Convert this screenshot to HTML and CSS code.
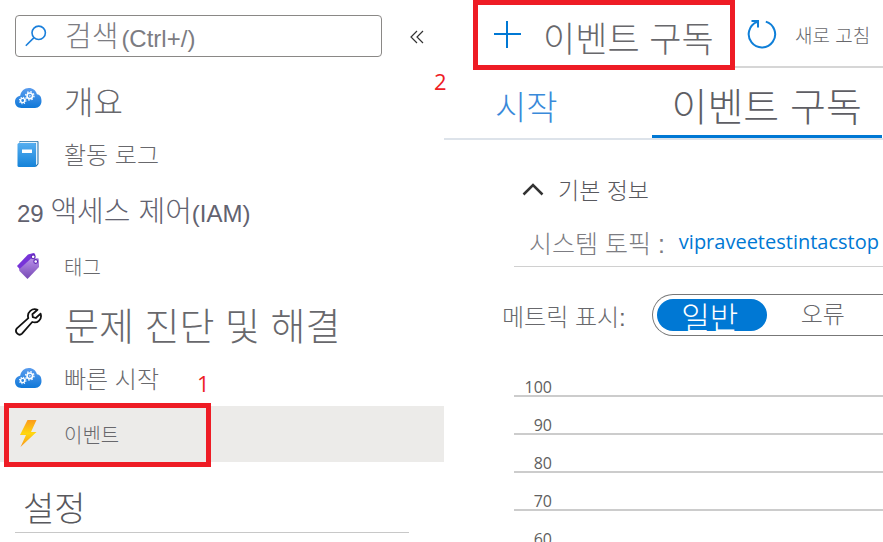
FILE: index.html
```html
<!DOCTYPE html>
<html lang="ko">
<head>
<meta charset="utf-8">
<title>이벤트 구독</title>
<link rel="stylesheet" href="styles.css">
</head>
<body>
<svg class="defs" aria-hidden="true">
  <defs>
    <linearGradient id="cloudFill" x1="0" y1="0" x2="0" y2="1"><stop offset="0" stop-color="#5a9cee"/><stop offset="1" stop-color="#0f78d8"/></linearGradient>
    <linearGradient id="bookFill" x1="0" y1="0" x2="0" y2="1"><stop offset="0" stop-color="#55aef0"/><stop offset="1" stop-color="#1583d9"/></linearGradient>
    <linearGradient id="tagFill" x1="0" y1="0" x2="0" y2="1"><stop offset="0" stop-color="#b991ea"/><stop offset="1" stop-color="#7648b4"/></linearGradient>
    <linearGradient id="boltFill" x1="0" y1="0" x2="0" y2="1"><stop offset="0" stop-color="#fb9a1c"/><stop offset=".5" stop-color="#ffd70f"/><stop offset="1" stop-color="#f9941e"/></linearGradient>
    <symbol id="cloud" viewBox="0 0 28 28">
      <path d="M6.500 24C2.500 24 0 21.300 0 17.800c0-3.100 2.200-5.600 5.200-6C6 7 9.500 4 13.800 4c4 0 7.200 2.500 8.100 6.200C25.500 10.600 26.500 13.700 26.500 17c0 4-2.600 7-6.500 7z" fill="url(#cloudFill)"/>
      <g fill="none" stroke="#fff">
        <circle cx="14.800" cy="11.800" r="2.800" stroke-width="1.600"/>
        <circle cx="14.800" cy="11.800" r="4.200" stroke-width="1.300" stroke-dasharray="1.500 1.799"/>
        <circle cx="14.800" cy="11.800" r=".6" stroke-width=".8"/>
        <circle cx="7.700" cy="16.500" r="2.100" stroke-width="1.400"/>
        <circle cx="7.700" cy="16.500" r="3.200" stroke-width="1.100" stroke-dasharray="1.200 1.313"/>
      </g>
    </symbol>
  </defs>
</svg>
<div class="app">
  <nav class="sidebar">
    <div class="search-row">
      <label class="search">
        <svg width="22" height="22" viewBox="0 0 22 22" fill="none" stroke="#1a7fdb" stroke-width="1.600"><circle cx="13.700" cy="7.800" r="6.700"/><path d="M9 12.600.800 20.800"/></svg>
        <span class="search-hint"><span class="ko">검색</span>(Ctrl+/)</span>
        <input class="search-input" type="text" aria-label="검색(Ctrl+/)">
      </label>
      <button class="collapse" aria-label="접기">
        <svg width="14" height="14" viewBox="0 0 14 14" fill="none" stroke="#333" stroke-width="1.200"><path d="M7 1 1 7l6 6M13 1 7 7l6 6"/></svg>
      </button>
    </div>
    <a class="item size-xl" href="#"><svg class="icon" width="28" height="28"><use href="#cloud"/></svg>개요</a>
    <a class="item size-md" href="#">
      <svg class="icon" width="28" height="28" viewBox="0 0 28 28"><path d="M4.500 1h18q1 0 1 1v22l-2 2.500H5z" fill="#1f6fa8"/><path d="M5.500 1.800h17v22l-1.500 1.500V3.200H4z" fill="#e8f4fc"/><rect x="2.500" y="3" width="18.500" height="24" rx="1.500" fill="url(#bookFill)"/><rect x="7" y="9.500" width="10" height="3.500" fill="#fff"/></svg>활동 로그</a>
    <a class="item item-plain" href="#">29 <span class="ko">액세스 제어</span>(IAM)</a>
    <a class="item size-sm" href="#">
      <svg class="icon" width="28" height="28" viewBox="0 0 28 28"><path d="M2 14 13 2.500 18.500 1q1.500 0 1.700 1.500V9L7 20z" fill="#7734d8"/><path d="M4 17.500 16 6.500l6.500-.5q1.500.2 1.500 2v7L12.500 27 4.500 19z" fill="url(#tagFill)"/><g fill="#fff" stroke="#5c25b3" stroke-width="1.100"><circle cx="18.200" cy="4.800" r="1.900"/><circle cx="20.700" cy="9.500" r="1.900"/></g></svg>태그</a>
    <a class="item size-xxl" href="#">
      <svg class="icon" width="28" height="28" viewBox="0 0 28 28" fill="none" stroke="#111" stroke-width="1.800" stroke-linejoin="round"><path d="M22.500 1.800C17.500-.500 11.500 4 13.300 10.200L1.600 20.700C-.600 24.500 4 28.500 7 25.600L17.200 14c5.500 1.800 10.200-3 8.400-8.300L20.800 10l-3-.8-.4-3z"/></svg>문제 진단 및 해결</a>
    <a class="item size-md" href="#"><svg class="icon" width="28" height="28"><use href="#cloud"/></svg>빠른 시작</a>
    <a class="item size-sm selected" href="#">
      <svg class="icon" width="28" height="28" viewBox="0 0 28 28"><path d="M12.500 0h9L16 12h5.500L5.500 27 11 15H5z" fill="url(#boltFill)"/></svg>이벤트
      <span class="mark mark-one"></span><span class="step step-one">1</span></a>
    <h2 class="group">설정</h2>
  </nav>
  <main class="main">
    <div class="toolbar">
      <button class="command command-add">
        <svg width="27" height="27" viewBox="0 0 27 27" stroke="#0078d4" stroke-width="2" fill="none"><path d="M13 0v27M0 13h27"/></svg>이벤트 구독</button>
      <button class="command command-refresh">
        <svg width="30" height="30" viewBox="0 0 30 30" stroke="#0f7fd8" stroke-width="2" fill="none"><path d="M18.800 2.600A13.200 13.200 0 1 1 10.200 2.900M4.500 2H11v6.500"/></svg>새로 고침</button>
      <span class="mark mark-two"></span><span class="step step-two">2</span>
    </div>
    <div class="tabs" role="tablist">
      <button class="tab" role="tab" aria-selected="false">시작</button>
      <button class="tab tab-active" role="tab" aria-selected="true">이벤트 구독</button>
    </div>
    <section class="content">
      <button class="essentials">
        <svg width="22" height="14" viewBox="0 0 22 14" fill="none" stroke="#333" stroke-width="2.500"><path d="M1.500 12.500 11 3l9.500 9.500"/></svg>기본 정보</button>
      <div class="topic"><span>시스템 토픽 :</span><a class="topic-link" href="#">vipraveetestintacstop</a></div>
      <div class="metrics">
        <span class="metrics-label">메트릭 표시:</span>
        <div class="pills">
          <button class="pill pill-on" aria-pressed="true">일반</button>
          <button class="pill" aria-pressed="false">오류</button>
        </div>
      </div>
      <div class="chart">
        <div class="tick"><span class="tick-label">100</span></div>
        <div class="tick"><span class="tick-label">90</span></div>
        <div class="tick"><span class="tick-label">80</span></div>
        <div class="tick"><span class="tick-label">70</span></div>
        <div class="tick"><span class="tick-label">60</span></div>
      </div>
    </section>
  </main>
</div>
</body>
</html>
```
FILE: styles.css
```css
* { box-sizing: border-box; }
body {
  margin: 0;
  background: #fff;
  color: #68686c;
  font-family: "Liberation Sans", "Noto Sans CJK KR", sans-serif;
  font-weight: 300;
  font-size: 24px;
}
button {
  border: 0;
  padding: 0;
  margin: 0;
  background: none;
  color: inherit;
  font: inherit;
  white-space: nowrap;
}
a { text-decoration: none; color: inherit; }
svg { flex: none; }
.defs { position: absolute; width: 0; height: 0; }
.app { display: flex; height: 100vh; overflow: hidden; }
.ko { font-size: 29px; }

.sidebar { flex: none; width: 444px; }
.search-row { display: flex; align-items: flex-start; gap: 28px; height: 70px; padding: 15px 20px 0 15px; }
.search {
  position: relative;
  display: flex;
  align-items: center;
  gap: 18px;
  flex: 1;
  height: 42px;
  padding-left: 9px;
  border: 1px solid #8a8886;
  border-radius: 4px;
}
.search-hint { display: flex; align-items: baseline; gap: 3px; padding-top: 4px; line-height: 40px; color: #7c7c82; }
.search-input { position: absolute; inset: 0; width: 100%; border: 0; background: transparent; font: inherit; }
.collapse { height: 44px; line-height: 0; }
.item {
  position: relative;
  display: flex;
  align-items: center;
  height: 56px;
  padding: 4px 0 0 15px;
  line-height: 1;
  white-space: nowrap;
}
.icon { margin: 0 21px 5px 0; }
.size-sm { font-size: 20px; }
.size-md { font-size: 24px; }
.size-xl { padding-top: 10px; font-size: 32px; }
.size-xxl { padding-top: 10px; font-size: 38px; }
.size-xl .icon, .size-xxl .icon { margin-bottom: 11px; }
.item-plain { display: block; padding: 2px 0 0 17px; line-height: 56px; color: #62626f; }
.selected { background: #ecebe9; }
.group {
  margin: 22px 35px 0 15px;
  padding: 2px 0 0 8px;
  border-bottom: 1px solid #c8c8c8;
  font-size: 34px;
  font-weight: 300;
  line-height: 46px;
  color: #58585d;
}

.mark { position: absolute; border: 5px solid #ee1c25; pointer-events: none; }
.mark-one { left: 4px; top: -3px; width: 207px; height: 64px; }
.mark-two { left: 0; top: 0; width: 262px; height: 70px; }
.step { position: absolute; color: #ee1c25; font: 500 22px/30px "Open Sans", sans-serif; }
.step-one { left: 197px; top: -38px; }
.step-two { left: -39px; top: 66px; }

.main { flex: 1; min-width: 0; }
.toolbar {
  position: relative;
  display: flex;
  align-items: center;
  height: 68px;
  margin-left: 29px;
  border-bottom: 2px solid #d6d6d6;
}
.command { display: flex; align-items: center; height: 68px; }
.command-add { width: 262px; padding: 6px 0 0 21px; gap: 22px; font-size: 35px; }
.command-add svg { margin-bottom: 4px; }
.command-refresh { padding: 2px 0 0 12px; gap: 18px; font-size: 19px; }
.tabs { display: flex; height: 72px; border-bottom: 2px solid #dde3ea; }
.tab { height: 70px; padding: 4px 51px 0; font-size: 34px; color: #3a8ada; }
.tab-active {
  margin-left: 43px;
  padding: 4px 20px 0;
  border-bottom: 3px solid #0078d4;
  font-size: 39px;
  color: #5e5e64;
}
.content { padding-left: 70px; }
.essentials { display: flex; align-items: center; gap: 14px; height: 78px; padding: 20px 0 0 8px; font-size: 23px; color: #58585d; }
.topic {
  display: flex;
  align-items: center;
  gap: 14px;
  height: 49px;
  padding-left: 15px;
  border-bottom: 1px solid #d0d0d0;
  color: #7c7c82;
  font-size: 25px;
  white-space: nowrap;
}
.topic-link { color: #0078d4; font: 400 20px/30px "Open Sans", sans-serif; }
.metrics { display: flex; align-items: center; gap: 26px; margin: 27px 0 0 -12px; white-space: nowrap; }
.pills {
  display: flex;
  flex: 1;
  align-items: center;
  height: 42px;
  padding-left: 4px;
  border: 1px solid #777;
  border-right: 0;
  border-radius: 21px 0 0 21px;
}
.pill { height: 32px; padding: 0 34px; line-height: 32px; }
.pill-on { width: 110px; padding: 4px 4px 0 0; border-radius: 16px; background: #0078d4; color: #fff; font-size: 31px; }
.chart { margin-top: 23px; }
.tick {
  height: 38px;
  padding-top: 16px;
  border-bottom: 2px solid #ccc;
  font: 400 16px/24px "Open Sans", sans-serif;
  color: #606060;
}
.tick-label { display: block; width: 38px; text-align: right; }
```
